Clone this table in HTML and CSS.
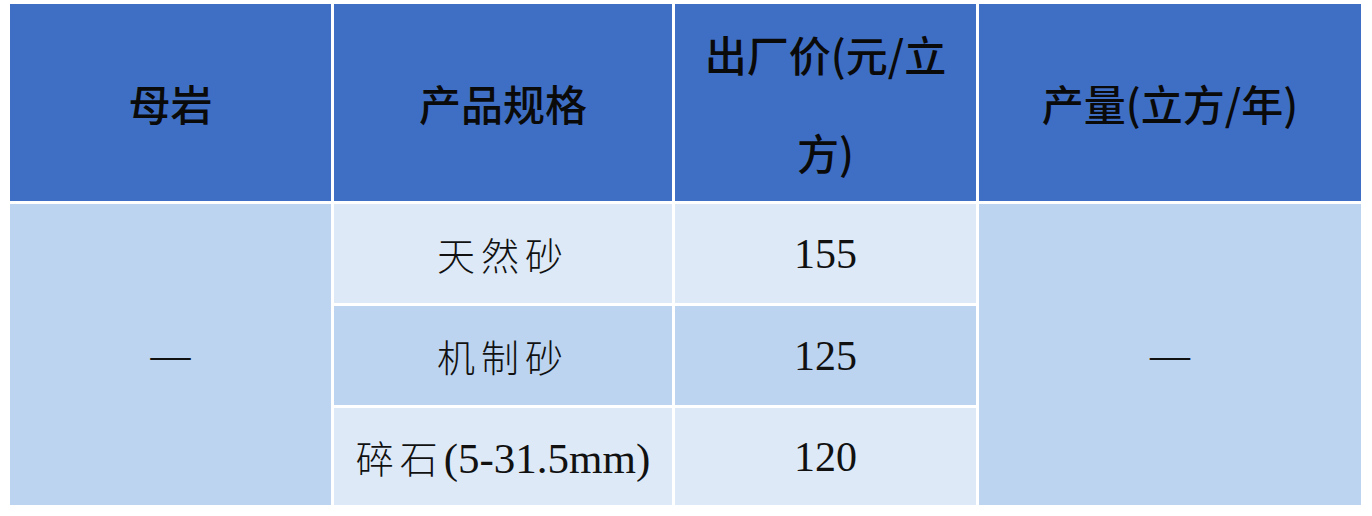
FILE: index.html
```html
<!DOCTYPE html>
<html lang="zh">
<head>
<meta charset="utf-8">
<title>产品价格表</title>
<link rel="stylesheet" href="styles.css">
</head>
<body>
<div class="page">
  <table class="price-table">
    <colgroup>
      <col class="c1"><col class="c2"><col class="c3"><col class="c4">
    </colgroup>
    <thead>
      <tr class="head-row">
        <th>母岩</th>
        <th>产品规格</th>
        <th class="wrap">出厂价(元/立方)</th>
        <th>产量(立方/年)</th>
      </tr>
    </thead>
    <tbody>
      <tr class="row r1">
        <td class="merged" rowspan="3">—</td>
        <td class="cjk light">天然砂</td>
        <td class="num light">155</td>
        <td class="merged" rowspan="3">—</td>
      </tr>
      <tr class="row r2">
        <td class="cjk dark">机制砂</td>
        <td class="num dark">125</td>
      </tr>
      <tr class="row r3">
        <td class="cjk light">碎石<span class="latin">(5-31.5mm)</span></td>
        <td class="num light">120</td>
      </tr>
    </tbody>
  </table>
</div>
</body>
</html>
```
FILE: styles.css
```css
html, body {
  margin: 0;
  padding: 0;
  background: #ffffff;
}
.page {
  padding: 1px 0 0 7px;
}
.price-table {
  border-collapse: separate;
  border-spacing: 3px;
  table-layout: fixed;
  width: 1357px;
  background: #ffffff;
}
.c1 { width: 321px; }
.c2 { width: 338px; }
.c3 { width: 301px; }
.c4 { width: 382px; }

.head-row { height: 197px; }
.head-row th {
  background: #3f6fc5;
  color: #0a0a0a;
  font-family: "Noto Sans CJK SC", "Liberation Sans", sans-serif;
  font-weight: 500;
  font-size: 42px;
  line-height: 98px;
  padding: 0 20px;
  text-align: center;
  vertical-align: middle;
}
.row td {
  padding: 0;
  text-align: center;
  vertical-align: middle;
  color: #111111;
}
.r1 { height: 99px; }
.r2 { height: 99px; }
.r3 { height: 97px; }

.light { background: #dde9f7; }
.dark { background: #bcd4f0; }
.merged {
  background: #bcd4f0;
  font-family: "Liberation Serif", serif;
  font-size: 40px;
}
.cjk {
  font-family: "Liberation Serif", "Noto Sans CJK SC", serif;
  font-weight: 300;
  font-size: 38px;
  letter-spacing: 6px;
}
.cjk .latin {
  font-weight: 400;
  font-size: 43px;
  letter-spacing: 0;
}
.num {
  font-family: "Liberation Serif", serif;
  font-size: 42px;
}
```
